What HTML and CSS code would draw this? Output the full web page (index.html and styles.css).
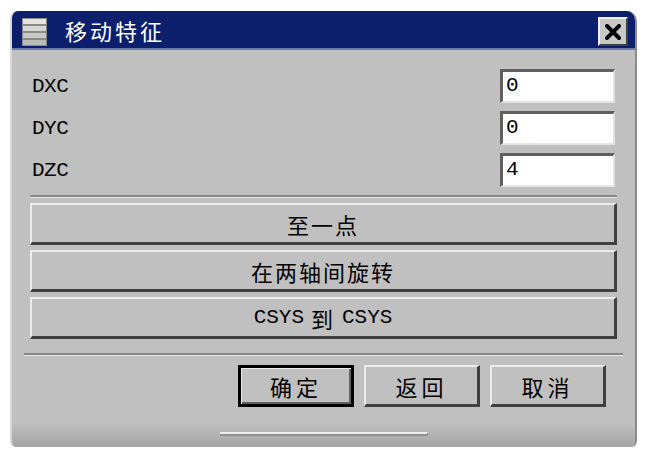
FILE: index.html
```html
<!DOCTYPE html>
<html>
<head>
<meta charset="utf-8">
<link rel="stylesheet" href="styles.css">
</head>
<body>
<div class="dialog">
  <div class="titlebar">
    <svg class="app-icon" width="25" height="28" viewBox="0 0 25 28">
      <rect x="0" y="0" width="25" height="28" fill="#8a8a86"/>
      <rect x="1" y="1" width="23" height="5" fill="#e4e4e0"/>
      <rect x="1" y="8" width="23" height="5" fill="#d6d6d2"/>
      <rect x="1" y="15" width="23" height="5" fill="#c8c8c4"/>
      <rect x="1" y="22" width="23" height="5" fill="#babab6"/>
    </svg>
    <span class="title">移动特征</span>
    <div class="close-btn">
      <svg width="16" height="16" viewBox="0 0 16 16">
        <path d="M2 2 L14 14 M14 2 L2 14" stroke="#000" stroke-width="4" stroke-linecap="square"/>
      </svg>
    </div>
  </div>
  <div class="content">
    <div class="field-row">
      <span class="label">DXC</span>
      <div class="input">0</div>
    </div>
    <div class="field-row">
      <span class="label">DYC</span>
      <div class="input">0</div>
    </div>
    <div class="field-row">
      <span class="label">DZC</span>
      <div class="input">4</div>
    </div>
    <div class="sep"></div>
    <div class="wide-buttons">
      <div class="btn wide">至一点</div>
      <div class="btn wide">在两轴间旋转</div>
      <div class="btn wide"><span class="mono">CSYS</span>&nbsp;到&nbsp;<span class="mono">CSYS</span></div>
    </div>
    <div class="sep sep-wide"></div>
    <div class="actions">
      <div class="btn action default">确定</div>
      <div class="btn action">返回</div>
      <div class="btn action">取消</div>
    </div>
  </div>
  <div class="footer">
    <div class="grip"></div>
  </div>
</div>
</body>
</html>
```
FILE: styles.css
```css
html, body {
  margin: 0;
  padding: 0;
  background: #ffffff;
}

.dialog {
  margin: 11px 0 0 10px;
  width: 627px;
  height: 436px;
  box-sizing: border-box;
  background: #c0c0c0;
  border-radius: 8px 10px 6px 6px;
  border-left: 2px solid #d8d8d8;
  border-right: 2px solid #8c8c8c;
  display: flex;
  flex-direction: column;
  overflow: hidden;
  font-family: "Noto Sans CJK SC", sans-serif;
}

.titlebar {
  height: 39px;
  box-sizing: border-box;
  background: #0b1f6c;
  border-bottom: 2px solid #6a7aa8;
  margin: 0 -2px;
  display: flex;
  align-items: center;
  padding-left: 12px;
  padding-right: 9px;
}

.app-icon {
  display: block;
  margin-top: 4px;
}

.title {
  color: #ffffff;
  font-size: 22px;
  letter-spacing: 3px;
  margin-left: 18px;
  line-height: 1;
}

.close-btn {
  margin-left: auto;
  width: 30px;
  height: 29px;
  box-sizing: border-box;
  background: #c8c8c4;
  border-top: 2px solid #f0f0f0;
  border-left: 2px solid #f0f0f0;
  border-right: 2px solid #404040;
  border-bottom: 2px solid #404040;
  display: flex;
  align-items: center;
  justify-content: center;
  margin-top: 4px;
}

.content {
  padding: 19px 18px 0 18px;
  display: flex;
  flex-direction: column;
}

.field-row {
  display: flex;
  justify-content: space-between;
  align-items: center;
  height: 34px;
  margin-bottom: 8px;
}

.label, .mono {
  font-family: "Liberation Mono", monospace;
  font-size: 21px;
  color: #000000;
}

.label {
  padding-left: 2px;
  letter-spacing: -0.5px;
}

.input {
  width: 115px;
  height: 34px;
  box-sizing: border-box;
  margin-right: 2px;
  background: #ffffff;
  border-top: 3px solid #606060;
  border-left: 3px solid #606060;
  border-right: 2px solid #e4e4e4;
  border-bottom: 2px solid #e4e4e4;
  font-family: "Liberation Mono", monospace;
  font-size: 21px;
  line-height: 28px;
  padding-left: 3px;
  color: #000000;
}

.sep {
  border-top: 2px solid #888888;
  border-bottom: 1px solid #e8e8e8;
  margin-top: 0;
  margin-bottom: 5px;
}

.wide-buttons {
  display: flex;
  flex-direction: column;
  gap: 5px;
}

.btn {
  box-sizing: border-box;
  background: #c0c0c0;
  border-top: 2px solid #ececec;
  border-left: 2px solid #ececec;
  border-right: 3px solid #404040;
  border-bottom: 3px solid #404040;
  display: flex;
  align-items: center;
  justify-content: center;
  font-size: 22px;
  letter-spacing: 2px;
  color: #000000;
}

.wide {
  height: 42px;
}

.wide .mono {
  letter-spacing: 0;
}

.sep-wide {
  margin: 14px -6px 9px -6px;
}

.actions {
  display: flex;
  justify-content: flex-end;
  gap: 10px;
  padding-right: 11px;
}

.action {
  width: 116px;
  height: 42px;
  letter-spacing: 4px;
}

.default {
  border: 3px solid #000000;
  box-shadow: inset 1px 1px 0 #ececec, inset -2px -2px 0 #606060;
}

.footer {
  margin-top: auto;
  height: 24px;
  background: linear-gradient(#c0c0c0, #a4a4a4);
  position: relative;
}

.grip {
  position: absolute;
  left: 208px;
  top: 9px;
  width: 208px;
  height: 4px;
  box-sizing: border-box;
  border-top: 2px solid #eeeeee;
  border-right: 1px solid #888888;
  border-bottom: 2px solid #909090;
}
```
